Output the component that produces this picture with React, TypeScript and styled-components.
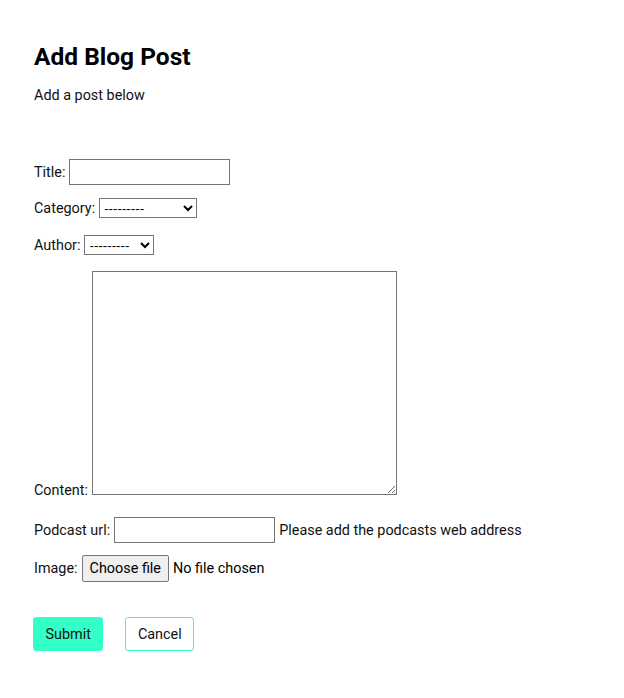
import React from "react";
import styled, { createGlobalStyle } from "styled-components";

const Global = createGlobalStyle`
  html, body { margin: 0; padding: 0; background: #fff; }
  body { font-family: Roboto, "Liberation Sans", sans-serif; color: #111; }
`;

const Page = styled.main`
  padding: 40px 33px 40px 33px;
  display: flex;
  flex-direction: column;
`;

const Heading = styled.h1`
  margin: 0;
  font-size: 24.5px;
  font-weight: 700;
  line-height: 34px;
  color: #000;
  padding-left: 1px;
`;

const Sub = styled.p`
  margin: 13px 0 0 0;
  font-size: 14.4px;
  line-height: 18px;
  padding-left: 1px;
`;

const Form = styled.form`
  display: flex;
  flex-direction: column;
  margin-top: 54px;
`;

const Row = styled.div<{ $top: number; $align?: string }>`
  display: flex;
  align-items: ${(p) => p.$align || "center"};
  gap: 4px;
  margin-top: ${(p) => p.$top}px;
  font-size: 14.4px;
`;

const Label = styled.label<{ $drop?: number }>`
  font-size: 14.4px;
  line-height: 17px;
  padding-left: 1px;
  margin-bottom: ${(p) => -(p.$drop || 0)}px;
`;

const TextInput = styled.input`
  box-sizing: border-box;
  width: 161px;
  height: 26px;
  border: 1px solid #767676;
  border-radius: 0;
  padding: 1px 2px;
  font: 13.33px Arial, "Liberation Sans", sans-serif;
`;

const Select = styled.select<{ $w: number }>`
  box-sizing: border-box;
  width: ${(p) => p.$w}px;
  height: 20px;
  border: 1px solid #767676;
  border-radius: 0;
  font: 13.33px Arial, "Liberation Sans", sans-serif;
  color: #000;
  background: #fff;
`;

const Area = styled.textarea`
  box-sizing: border-box;
  width: 305px;
  height: 224px;
  border: 1px solid #767676;
  border-radius: 0;
  margin: 0;
`;

const Help = styled.span`
  font-size: 14.4px;
`;

const FileWrap = styled.span`
  display: inline-flex;
  align-items: center;
  gap: 4px;
`;

const HiddenFile = styled.input`
  display: none;
`;

const FileButton = styled.label`
  box-sizing: border-box;
  display: inline-flex;
  align-items: center;
  height: 27px;
  padding: 0 7px;
  background: #efefef;
  border: 1px solid #767676;
  border-radius: 2px;
  color: #000;
  font-size: 14.4px;
  cursor: default;
`;

const FileName = styled.span`
  font-size: 14.4px;
  color: #000;
`;

const Buttons = styled.div`
  display: flex;
  gap: 22px;
  margin-top: 35px;
`;

const Btn = styled.button<{ $primary?: boolean }>`
  box-sizing: border-box;
  height: 34px;
  padding: 0 11.5px;
  font-family: Roboto, "Liberation Sans", sans-serif;
  font-size: 14.4px;
  color: #111;
  border-radius: 3px;
  border: 1px solid #33ffc9;
  background: ${(p) => (p.$primary ? "#33ffc9" : "#fff")};
`;

export default function App() {
  return (
    <>
      <Global />
      <Page>
        <Heading>Add Blog Post</Heading>
        <Sub>Add a post below</Sub>
        <Form onSubmit={(e) => e.preventDefault()}>
          <Row $top={0}>
            <Label htmlFor="title">Title:</Label>
            <TextInput id="title" type="text" />
          </Row>
          <Row $top={13}>
            <Label htmlFor="cat">Category:</Label>
            <Select id="cat" $w={98}>
              <option>---------</option>
            </Select>
          </Row>
          <Row $top={17}>
            <Label htmlFor="auth">Author:</Label>
            <Select id="auth" $w={70}>
              <option>---------</option>
            </Select>
          </Row>
          <Row $top={16} $align="flex-end">
            <Label htmlFor="content" $drop={4}>Content:</Label>
            <Area id="content" />
          </Row>
          <Row $top={22}>
            <Label htmlFor="url">Podcast url:</Label>
            <TextInput id="url" type="text" />
            <Help>Please add the podcasts web address</Help>
          </Row>
          <Row $top={12}>
            <Label htmlFor="img">Image:</Label>
            <FileWrap>
              <FileButton htmlFor="img">Choose file</FileButton>
              <HiddenFile id="img" type="file" />
              <FileName>No file chosen</FileName>
            </FileWrap>
          </Row>
          <Buttons>
            <Btn type="submit" $primary>Submit</Btn>
            <Btn type="button">Cancel</Btn>
          </Buttons>
        </Form>
      </Page>
    </>
  );
}
